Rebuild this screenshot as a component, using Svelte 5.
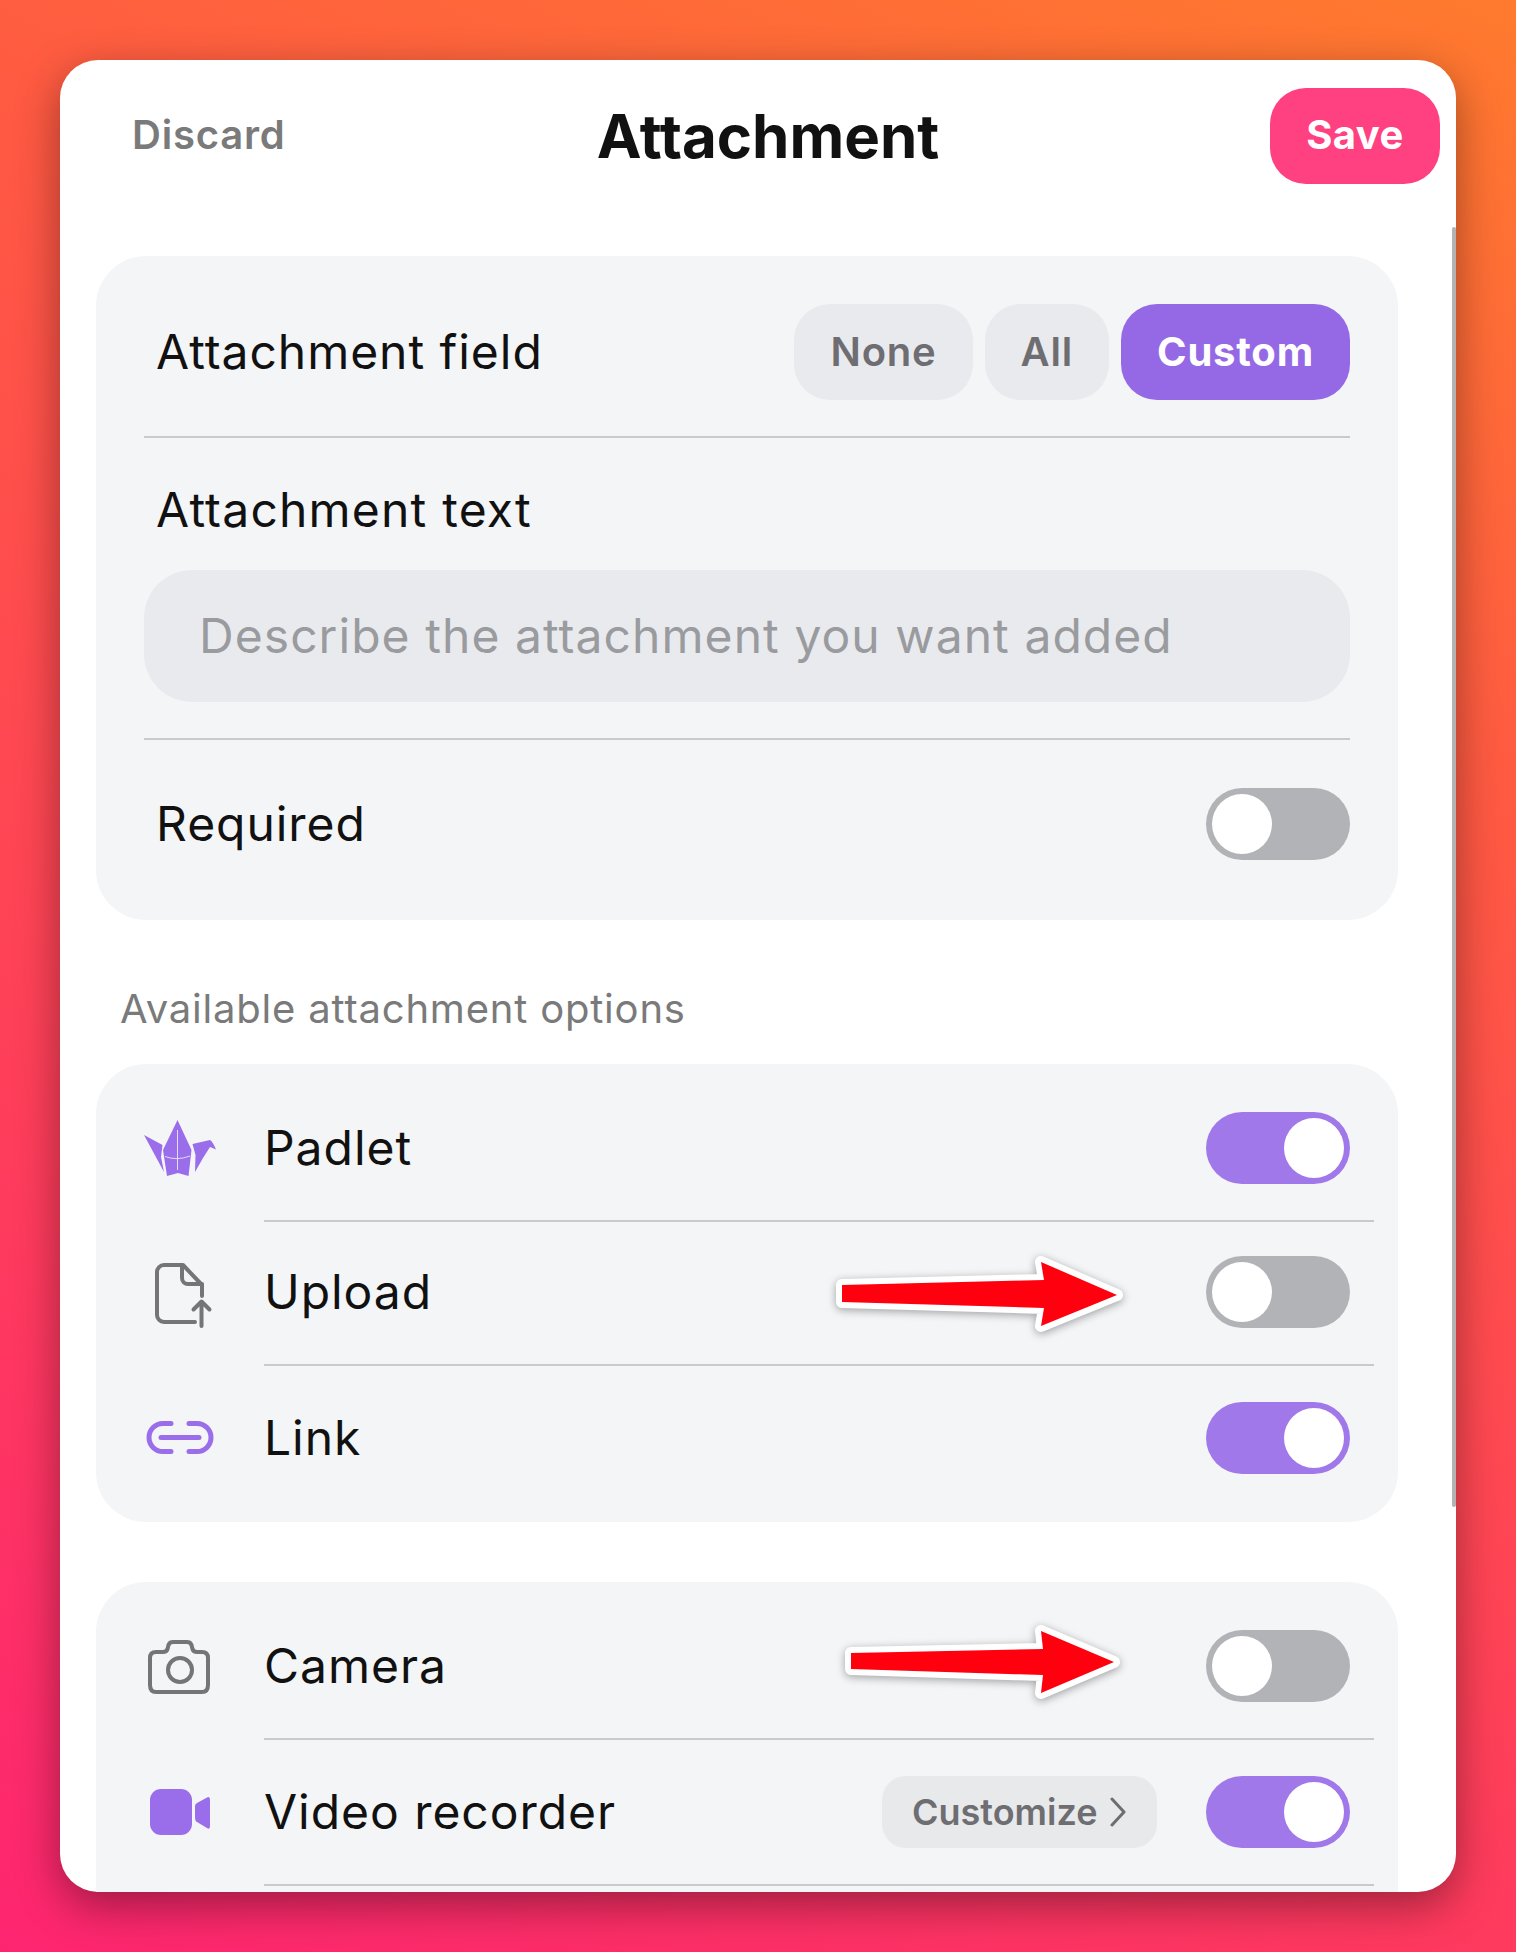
<script>
  const group1 = [
    { id: 'padlet', label: 'Padlet', on: true },
    { id: 'upload', label: 'Upload', on: false },
    { id: 'link', label: 'Link', on: true }
  ];
  const group2 = [
    { id: 'camera', label: 'Camera', on: false },
    { id: 'video', label: 'Video recorder', on: true, customize: true }
  ];
</script>

{#snippet toggle(on)}
  <span class="toggle" class:on><span class="knob"></span></span>
{/snippet}

{#snippet icon(id)}
  {#if id === 'padlet'}
    <svg class="ic" viewBox="24 21 72 72" aria-hidden="true">
      <path class="pf" d="M57.500 28 L71.500 58 L68.500 84 L58 81 L47 84 L43 58 Z" />
      <path class="pf" d="M24 43 L42.500 53 L41 65 L44 80 Z" />
      <path class="pf" d="M72.500 52 L90 48 Q93 50 96 57.500 L90 55 L83 66 L75 80 L75.500 63 Z" />
      <path class="crease" d="M57.500 38 V78 M45 64.500 Q57 69 70 64" />
    </svg>
  {:else if id === 'upload'}
    <svg class="ic" viewBox="24 16 72 72" aria-hidden="true">
      <path class="gs" d="M75 80 H44 a7 7 0 0 1 -7 -7 V30 a7 7 0 0 1 7 -7 H63 L82 43 V54" />
      <path class="gs" d="M62 24 V36 a6 6 0 0 0 6 6 H82" />
      <path class="gs" d="M81.500 84 V60 M73.500 67.500 L81.500 59.500 L89.500 67.500" />
    </svg>
  {:else if id === 'link'}
    <svg class="ic" viewBox="24 12 72 72" aria-hidden="true">
      <path class="ps" d="M51 33.500 H43 a14 14 0 0 0 0 28 H51" />
      <path class="ps" d="M69 33.500 H77 a14 14 0 0 1 0 28 H69" />
      <path class="ps" d="M41 47.500 H79" />
    </svg>
  {:else if id === 'camera'}
    <svg class="ic" viewBox="24 9 72 72" aria-hidden="true">
      <path class="gs" d="M36 30 H43 Q46.500 30 47.500 27 L48.500 23 Q49.500 20 53 20 H67 Q70.500 20 71.500 23 L72.500 27 Q73.500 30 77 30 H82 Q88 30 88 36 V63 Q88 70 82 70 H36 Q30 70 30 63 V36 Q30 30 36 30 Z" />
      <circle class="gs" cx="60" cy="48" r="12" />
    </svg>
  {:else}
    <svg class="ic" viewBox="144 1776 72 72" aria-hidden="true">
      <rect class="pf" x="150" y="1788" width="42" height="46" rx="11" />
      <path class="pf" d="M195 1805 Q195 1803 197 1802 L207 1796.500 Q210 1795 210 1799 V1825 Q210 1829 207 1827 L197 1821 Q195 1820 195 1817 Z" />
    </svg>
  {/if}
{/snippet}

{#snippet optionRow(item)}
  <div class="row">
    <span class="icon-cell">{@render icon(item.id)}</span>
    <div class="row-body">
      <span class="label">{item.label}</span>
      {#if item.customize}
        <button class="customize" type="button">
          Customize
          <svg class="chev" viewBox="0 0 18 30" aria-hidden="true"><path d="M3 2 L15 15 L3 28" /></svg>
        </button>
      {/if}
      {@render toggle(item.on)}
    </div>
  </div>
{/snippet}

<main class="page">
  <div class="card">
    <header class="head">
      <button class="discard" type="button">Discard</button>
      <h1>Attachment</h1>
      <button class="save" type="button">Save</button>
    </header>

    <section class="panel settings">
      <div class="field-row">
        <span class="label">Attachment field</span>
        <div class="seg">
          <button class="seg-btn" type="button">None</button>
          <button class="seg-btn" type="button">All</button>
          <button class="seg-btn active" type="button">Custom</button>
        </div>
      </div>
      <div class="text-block">
        <div class="label block-label">Attachment text</div>
        <input class="text-input" placeholder="Describe the attachment you want added" />
      </div>
      <div class="required">
        <span class="label">Required</span>
        {@render toggle(false)}
      </div>
    </section>

    <p class="caption">Available attachment options</p>

    <section class="panel list first">
      {#each group1 as item}
        {@render optionRow(item)}
      {/each}
    </section>

    <section class="panel list second">
      {#each group2 as item}
        {@render optionRow(item)}
      {/each}
    </section>

    <div class="scrollbar"></div>

    <svg class="arrows" viewBox="60 60 1396 1832" aria-hidden="true">
      <polygon points="842,1285 1044,1280 1041,1262 1117,1295 1041,1326 1044,1308 842,1302" />
      <polygon points="851,1653 1043,1649 1041,1631 1114,1662 1041,1693 1043,1675 851,1669" />
    </svg>
  </div>
</main>

<style>
  :global(body) {
    margin: 0;
  }
  .page {
    box-sizing: border-box;
    width: 1516px;
    height: 1952px;
    padding: 60px;
    background: linear-gradient(205deg, #ff7a2e 0%, #ff5a42 30%, #ff4455 60%, #fd2570 100%);
    font-family: Inter, "Liberation Sans", sans-serif;
    color: #111;
  }
  .card {
    position: relative;
    box-sizing: border-box;
    width: 1396px;
    height: 1832px;
    background: #fff;
    border-radius: 38px;
    overflow: hidden;
    box-shadow: 0 14px 44px rgba(0, 0, 0, 0.38);
  }
  button {
    font-family: inherit;
    border: 0;
    cursor: pointer;
  }
  .head {
    display: grid;
    grid-template-columns: 1fr auto 1fr;
    align-items: center;
    padding: 28px 16px 72px 36px;
  }
  .discard {
    justify-self: start;
    background: none;
    padding: 0 0 3px 36px;
    font-size: 40px;
    font-weight: 600;
    letter-spacing: 0.02em;
    color: #7a7a7a;
  }
  h1 {
    margin: 0;
    font-size: 60px;
    font-weight: 700;
    line-height: 72px;
    color: #111;
  }
  .save {
    justify-self: end;
    width: 170px;
    height: 96px;
    padding: 0 0 3px;
    border-radius: 36px;
    background: #ff4081;
    color: #fff;
    font-size: 40px;
    font-weight: 700;
    letter-spacing: 0.01em;
  }
  .panel {
    margin: 0 58px 0 36px;
    background: #f4f5f7;
    border-radius: 50px;
  }
  .label {
    font-size: 48px;
    line-height: 58px;
    letter-spacing: 0.02em;
    color: #111;
  }
  .settings {
    padding: 48px 48px 60px;
  }
  .field-row {
    display: flex;
    align-items: center;
    justify-content: space-between;
    padding: 0 0 36px 12px;
    border-bottom: 2px solid #c9cacd;
  }
  .seg {
    display: flex;
    gap: 12px;
  }
  .seg-btn {
    height: 96px;
    padding: 0 36px 2px;
    border-radius: 36px;
    background: #e9eaee;
    color: #6e6e72;
    font-size: 40px;
    font-weight: 600;
    letter-spacing: 0.02em;
  }
  .seg-btn.active {
    background: #9569e6;
    color: #fff;
    font-weight: 700;
  }
  .text-block {
    padding-bottom: 36px;
    border-bottom: 2px solid #c9cacd;
  }
  .block-label {
    margin: 43px 0 31px 12px;
    letter-spacing: 0.025em;
  }
  .text-input {
    display: block;
    box-sizing: border-box;
    width: 100%;
    height: 132px;
    padding: 0 55px 2px;
    border: 0;
    border-radius: 48px;
    background: #e9eaee;
    font-family: inherit;
    font-size: 48px;
    letter-spacing: 0.022em;
    outline: none;
  }
  .text-input::placeholder {
    color: #9a9b9e;
    opacity: 1;
  }
  .required {
    display: flex;
    align-items: center;
    justify-content: space-between;
    margin-top: 48px;
    padding-left: 12px;
  }
  .toggle {
    display: block;
    flex: none;
    box-sizing: border-box;
    width: 144px;
    height: 72px;
    padding: 6px;
    border-radius: 36px;
    background: #b2b3b7;
  }
  .toggle.on {
    background: #a078ea;
  }
  .knob {
    display: block;
    width: 60px;
    height: 60px;
    border-radius: 50%;
    background: #fff;
  }
  .toggle.on .knob {
    margin-left: auto;
  }
  .caption {
    margin: 65px 0 31px 60px;
    font-size: 40px;
    line-height: 48px;
    letter-spacing: 0.02em;
    color: #7a7a7a;
  }
  .list {
    padding: 12px 24px 12px 48px;
  }
  .list.second {
    margin-top: 60px;
    padding-bottom: 160px;
  }
  .row {
    display: flex;
    align-items: stretch;
    height: 146px;
  }
  .first .row {
    height: 144px;
  }
  .first .row:first-child {
    height: 146px;
  }
  .icon-cell {
    display: flex;
    align-items: center;
    flex: none;
    width: 120px;
  }
  .ic {
    display: block;
    width: 72px;
    height: 72px;
  }
  .row-body {
    flex: 1;
    display: flex;
    align-items: center;
    box-sizing: border-box;
    padding-right: 24px;
    border-bottom: 2px solid #c9cacd;
  }
  .first .row:nth-child(2) .row-body {
    padding-bottom: 2px;
  }
  .first .row:last-child .row-body {
    border-bottom: 0;
  }
  .row-body .label {
    margin-right: auto;
  }
  .customize {
    display: flex;
    align-items: center;
    gap: 12px;
    height: 72px;
    width: 275px;
    box-sizing: border-box;
    margin-right: 49px;
    padding: 0 0 0 30px;
    border-radius: 24px;
    background: #e8e9eb;
    color: #6e6e72;
    font-size: 36px;
    font-weight: 600;
  }
  .chev {
    width: 18px;
    height: 30px;
    fill: none;
    stroke: #6e6e72;
    stroke-width: 3;
    stroke-linecap: round;
    stroke-linejoin: round;
  }
  .pf {
    fill: #9a6dea;
  }
  .crease {
    fill: none;
    stroke: #e4dbf8;
    stroke-width: 1;
  }
  .gs {
    fill: none;
    stroke: #757575;
    stroke-width: 4;
    stroke-linecap: round;
    stroke-linejoin: round;
  }
  .ps {
    fill: none;
    stroke: #9a6dea;
    stroke-width: 5;
    stroke-linecap: round;
  }
  .scrollbar {
    position: absolute;
    top: 167px;
    right: 0;
    width: 4px;
    height: 1280px;
    background: #b3b3b3;
    border-radius: 2px;
  }
  .arrows {
    position: absolute;
    left: 0;
    top: 0;
    width: 1396px;
    height: 1832px;
    pointer-events: none;
    filter: drop-shadow(0 2px 4px rgba(0, 0, 0, 0.35));
  }
  .arrows polygon {
    fill: #ff000f;
    stroke: #fff;
    stroke-width: 12;
    stroke-linejoin: round;
    paint-order: stroke;
  }
</style>
